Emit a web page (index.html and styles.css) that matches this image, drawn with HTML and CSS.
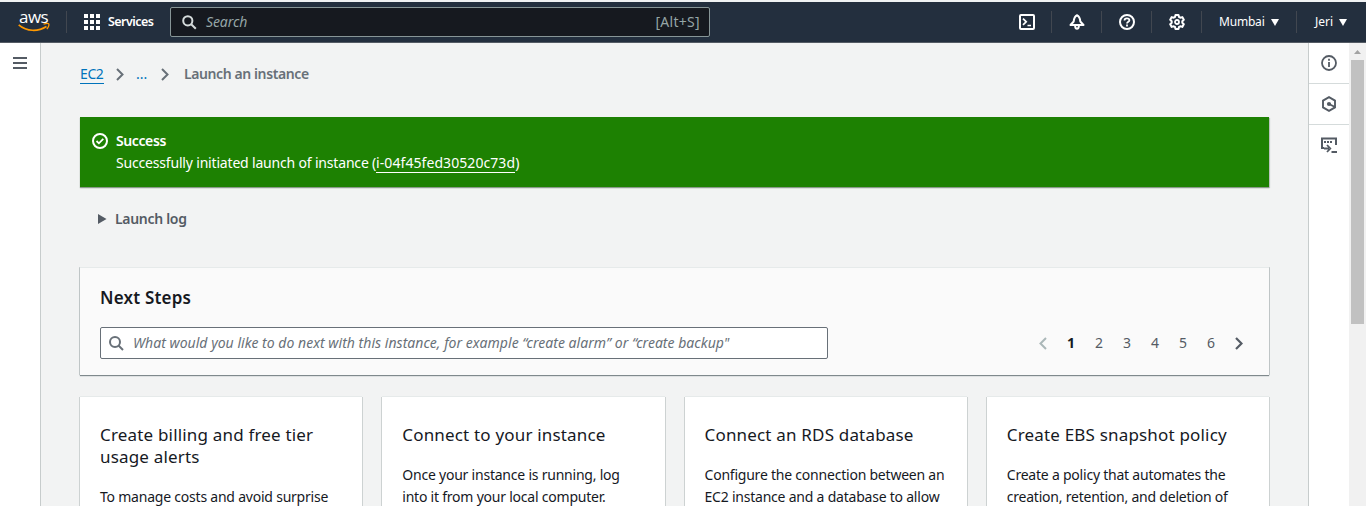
FILE: index.html
```html
<!DOCTYPE html>
<html lang="en">
<head>
<meta charset="utf-8">
<title>Launch an instance | EC2</title>
<link rel="stylesheet" href="styles.css">
</head>
<body>
<header class="topbar">
  <a class="logo"><span class="logo-text">aws</span>
    <svg class="logo-smile" width="32" height="10" viewBox="0 0 32 10" fill="none" stroke="#f90"><path d="M.7 1.8C9 8.800 20 8.800 28.500 3.500" stroke-width="1.700"/><path d="M25.500 1.200C28 .4 30.500.5 30.800 1c.4 1-.4 3.700-2 5" stroke-width="1.300"/></svg>
  </a>
  <a class="services">
    <svg width="16" height="16" fill="#fff"><path d="M0 0h4v4H0zM6 0h4v4H6zM12 0h4v4h-4zM0 6h4v4H0zM6 6h4v4H6zM12 6h4v4h-4zM0 12h4v4H0zM6 12h4v4H6zM12 12h4v4h-4z"/></svg>
    <span class="services-text">Services</span>
  </a>
  <div class="global-search">
    <svg width="15" height="15" viewBox="0 0 15 15" fill="none" stroke="#d5dbdb" stroke-width="2"><circle cx="5.800" cy="5.800" r="4.600"/><path d="M9.200 9.200l4.600 4.600"/></svg>
    <span class="global-hint">Search</span>
    <span class="shortcut">[Alt+S]</span>
  </div>
  <nav class="tools">
    <a class="tool"><svg width="16" height="16" viewBox="0 0 16 16" fill="none" stroke="#fff" stroke-width="2"><rect x="1" y="1" width="14" height="14" rx="1"/><path d="M4 4.700l3.200 3.100L4 10.900M8.500 11.500H12" stroke-width="1.700"/></svg></a>
    <a class="tool"><svg width="16" height="16" viewBox="0 0 16 16" fill="none" stroke="#fff" stroke-width="2" stroke-linejoin="round"><path d="M8 1.200C5.800 2 5 4.500 4.700 7.500L1.500 11h13l-3.200-3.500C11 4.500 10.200 2 8 1.200z"/><path d="M6.200 11.500v1.200C6.500 15.300 9.500 15.300 9.800 12.700v-1.200"/></svg></a>
    <a class="tool"><svg width="16" height="16" viewBox="0 0 16 16" fill="none" stroke="#fff" stroke-width="2"><circle cx="8" cy="8" r="7"/><path d="M5.500 6.500C5.500 3.600 10.400 3.700 10.400 6.200 10.400 7.800 8 7.600 8 9.600M8 10.600v1.800" stroke-width="1.800"/></svg></a>
    <a class="tool"><svg width="16" height="16" viewBox="0 0 16 16" fill="none" stroke="#fff" stroke-width="2" stroke-linejoin="round"><path d="M6.500 1h3l.5 2 1.300.7 2-.6 1.500 2.600L13.300 7.200v1.600l1.500 1.500-1.500 2.600-2-.6L10 13l-.5 2h-3L6 13l-1.300-.7-2 .6-1.500-2.600L2.700 8.800V7.200L1.200 5.700l1.500-2.600 2 .6L6 3z"/><circle cx="8" cy="8" r="2" stroke-width="1.800"/></svg></a>
    <a class="menu menu-region"><span>Mumbai</span><svg width="8" height="7"><path d="M0 0h8L4 7z" fill="#fff"/></svg></a>
    <a class="menu menu-user"><span>Jeri</span><svg width="8" height="7"><path d="M0 0h8L4 7z" fill="#fff"/></svg></a>
  </nav>
</header>
<div class="shell">
  <aside class="left-rail"><svg width="14" height="12" fill="#545b64"><path d="M0 0h14v2H0zM0 5h14v2H0zM0 10h14v2H0z"/></svg></aside>
  <main class="content">
    <nav class="crumbs">
      <a class="crumb-link">EC2</a>
      <svg class="sep" width="8" height="13" viewBox="0 0 8 13" fill="none" stroke="#687078" stroke-width="2"><path d="M1 1l5.500 5.500L1 12"/></svg>
      <a class="crumb-more">...</a>
      <svg class="sep" width="8" height="13" viewBox="0 0 8 13" fill="none" stroke="#687078" stroke-width="2"><path d="M1 1l5.500 5.500L1 12"/></svg>
      <span class="crumb-here">Launch an instance</span>
    </nav>
    <section class="flash">
      <svg width="16" height="16" viewBox="0 0 16 16" fill="none" stroke="#fff" stroke-width="2"><circle cx="8" cy="8" r="7"/><path d="M4.500 8l2.400 2.300 4.400-4.500" stroke-width="1.800"/></svg>
      <div>
        <div class="flash-title"><span>Success</span></div>
        <div class="flash-body"><span>Successfully initiated launch of instance (<a class="flash-link">i-04f45fed30520c73d</a>)</span></div>
      </div>
    </section>
    <div class="log"><svg width="9" height="10"><path d="M0 0l8.500 5L0 10z" fill="#545b64"/></svg><span>Launch log</span></div>
    <section class="steps">
      <h2 class="steps-title"><span>Next Steps</span></h2>
      <div class="steps-row">
        <div class="filter">
          <svg width="15" height="15" viewBox="0 0 15 15" fill="none" stroke="#687078" stroke-width="2"><circle cx="6" cy="6" r="5"/><path d="M9.500 9.500l4.500 4.500"/></svg>
          <span class="filter-hint">What would you like to do next with this instance, for example “create alarm” or “create backup"</span>
        </div>
        <div class="pager">
          <svg width="8" height="13" viewBox="0 0 8 13" fill="none" stroke="#aab7b8" stroke-width="2"><path d="M7 1L1.500 6.500 7 12"/></svg>
          <div class="pages"><span class="page page-on">1</span><span class="page">2</span><span class="page">3</span><span class="page">4</span><span class="page">5</span><span class="page">6</span></div>
          <svg width="8" height="13" viewBox="0 0 8 13" fill="none" stroke="#545b64" stroke-width="2.200"><path d="M1 1l5.500 5.500L1 12"/></svg>
        </div>
      </div>
    </section>
    <section class="cards">
      <article class="card"><h3 class="card-title">Create billing and free tier<br>usage alerts</h3><p class="card-text">To manage costs and avoid surprise</p></article>
      <article class="card"><h3 class="card-title">Connect to your instance</h3><p class="card-text">Once your instance is running, log<br>into it from your local computer.</p></article>
      <article class="card"><h3 class="card-title">Connect an RDS database</h3><p class="card-text">Configure the connection between an<br>EC2 instance and a database to allow</p></article>
      <article class="card"><h3 class="card-title">Create EBS snapshot policy</h3><p class="card-text">Create a policy that automates the<br>creation, retention, and deletion of</p></article>
    </section>
  </main>
  <aside class="right-rail">
    <a class="rail-item"><svg width="16" height="16" viewBox="0 0 16 16" fill="none" stroke="#545b64" stroke-width="1.800"><circle cx="8" cy="8" r="7"/><path d="M8 3.800v2M8 7v5"/></svg></a>
    <a class="rail-item"><svg width="16" height="16" viewBox="0 0 16 16" fill="none" stroke="#545b64" stroke-width="1.900"><path d="M8 1.200l6 3.400v6.800l-6 3.400-6-3.400V4.600z"/><circle cx="8" cy="8" r="2.100" fill="#545b64" stroke="none"/><path d="M8 8l6 3"/></svg></a>
    <a class="rail-item"><svg width="17" height="17" viewBox="0 0 17 17" fill="none" stroke="#545b64" stroke-width="2"><path d="M3 11H1V1.500h14V8"/><path d="M3 5h2M6 5h2M9 5h2" stroke-width="1.800"/><path d="M3 11.500h5M6 8l3.300 3.500L6 15M10.500 15H16" stroke-width="1.800"/></svg></a>
  </aside>
  <div class="scrollbar"><svg class="scroll-up" width="7" height="4"><path d="M3.500 0L7 4H0z" fill="#a3a3a3"/></svg><div class="thumb"></div></div>
</div>
</body>
</html>
```
FILE: styles.css
```css
* { box-sizing: border-box; }
body {
  margin: 0;
  height: 506px;
  overflow: hidden;
  background: #f2f3f3;
  font: 14px/22px "Noto Sans", "Open Sans", sans-serif;
  color: #16191f;
}
svg { display: block; flex: none; }
span, a { white-space: nowrap; }

.topbar {
  display: flex;
  align-items: center;
  height: 43px;
  border-top: 2px solid #f0f2f3;
  border-bottom: 1px solid #545b64;
  background: #232f3e;
  color: #fff;
}
.logo { display: flex; flex-direction: column; width: 67px; height: 22px; padding-left: 18px; border-right: 1px solid #414750; }
.logo-text { height: 13px; padding-left: 1px; font: 500 17px/12px "Open Sans", sans-serif; letter-spacing: -.5px; }
.services { display: flex; align-items: center; gap: 8px; width: 103px; padding-left: 17px; font-size: 12.500px; font-weight: 600; letter-spacing: -.55px; }
.global-search {
  display: flex;
  align-items: center;
  width: 540px;
  height: 30px;
  padding: 0 9px 0 11px;
  border: 1px solid #879596;
  border-radius: 2px;
  background: #16191f;
  color: #95a5a6;
}
.global-hint { flex: 1; padding-left: 9px; font-style: italic; letter-spacing: -.1px; }
.shortcut { letter-spacing: .3px; }
.tools { display: flex; align-items: center; margin-left: auto; font-size: 12px; letter-spacing: -.2px; }
.tool { display: flex; align-items: center; justify-content: center; width: 50px; height: 22px; border-right: 1px solid #414750; }
.menu { display: flex; align-items: center; gap: 6px; height: 22px; }
.menu-region { width: 95px; padding-left: 17px; border-right: 1px solid #414750; }
.menu-user { width: 69px; padding-left: 18px; letter-spacing: 0; }

.shell { display: flex; height: 463px; }
.left-rail { width: 41px; padding: 14px 13px; border-right: 1px solid #c7cccc; background: #fff; }
.content { display: flex; flex-direction: column; flex: 1; min-width: 0; padding: 20px 39px 0; }
.content > * { flex: none; }

.crumbs { display: flex; align-items: center; height: 22px; margin-bottom: 32px; }
.crumb-link { width: 24px; height: 20px; line-height: 20px; border-bottom: 1px solid #0073bb; color: #0073bb; letter-spacing: -.4px; }
.sep { margin: 0 12px; }
.crumb-more { width: 13px; color: #0073bb; }
.crumb-here { padding-left: 3px; color: #687078; font-weight: 600; letter-spacing: -.4px; }

.flash {
  display: flex;
  gap: 8px;
  height: 70px;
  margin: 0 0 21px;
  padding: 13px 12px;
  background: #1d8102;
  box-shadow: 0 1px 1px #8a9a8a, 1px 1px 1px #c7cccc;
  color: #fff;
}
.flash > svg { margin-top: 3px; }
.flash-title { font-weight: 600; letter-spacing: -.4px; }
.flash-body { letter-spacing: -.18px; }
.flash-link { border-bottom: 1px solid #fff; letter-spacing: .07px; }

.log { display: flex; align-items: center; gap: 8px; height: 22px; margin-bottom: 37px; padding-left: 18px; color: #545b64; font-weight: 600; letter-spacing: -.3px; }

.steps {
  height: 108px;
  padding: 19px 20px 0;
  border-top: 1px solid #e6eaea;
  background: #fafafa;
  box-shadow: 0 1px 1px #7f898c, 1px 0 0 #cdd2d2, -1px 0 0 #cdd2d2;
}
.steps-title { margin: 0 0 18px; font-size: 17px; line-height: 22px; font-weight: 600; letter-spacing: .2px; }
.steps-row { display: flex; align-items: center; justify-content: space-between; }
.filter { display: flex; align-items: center; gap: 9px; width: 728px; height: 32px; padding-left: 8px; border: 1px solid #687078; border-radius: 2px; background: #fff; }
.filter-hint { color: #687078; font-style: italic; letter-spacing: .03px; }
.pager { display: flex; align-items: center; gap: 10px; margin-right: 6px; }
.pages { display: flex; }
.page { width: 28px; text-align: center; color: #545b64; }
.page-on { color: #16191f; font-weight: 700; }

.cards { display: grid; grid-template-columns: repeat(4, 1fr); gap: 20px; height: 109px; margin-top: 22px; }
.card { padding: 27px 20px 0; background: #fff; box-shadow: 1px 0 0 #cdd2d2, -1px 0 0 #cdd2d2, 0 -1px 0 #e6eaea; }
.card-title { margin: 0 0 18px; font-size: 17px; line-height: 22px; font-weight: 400; letter-spacing: .18px; white-space: nowrap; }
.card-text { margin: 0; letter-spacing: -.22px; white-space: nowrap; }

.right-rail { width: 41px; border-left: 1px solid #c7cccc; background: #fff; }
.rail-item { display: flex; align-items: center; justify-content: center; height: 41px; border-bottom: 1px solid #d5dbdb; }
.rail-item:last-child { border-bottom: 0; }
.scrollbar { display: flex; flex-direction: column; align-items: center; width: 17px; padding-top: 7px; background: #f1f1f1; }
.thumb { width: 13px; height: 264px; margin-top: 6px; background: #c1c1c1; }
```
